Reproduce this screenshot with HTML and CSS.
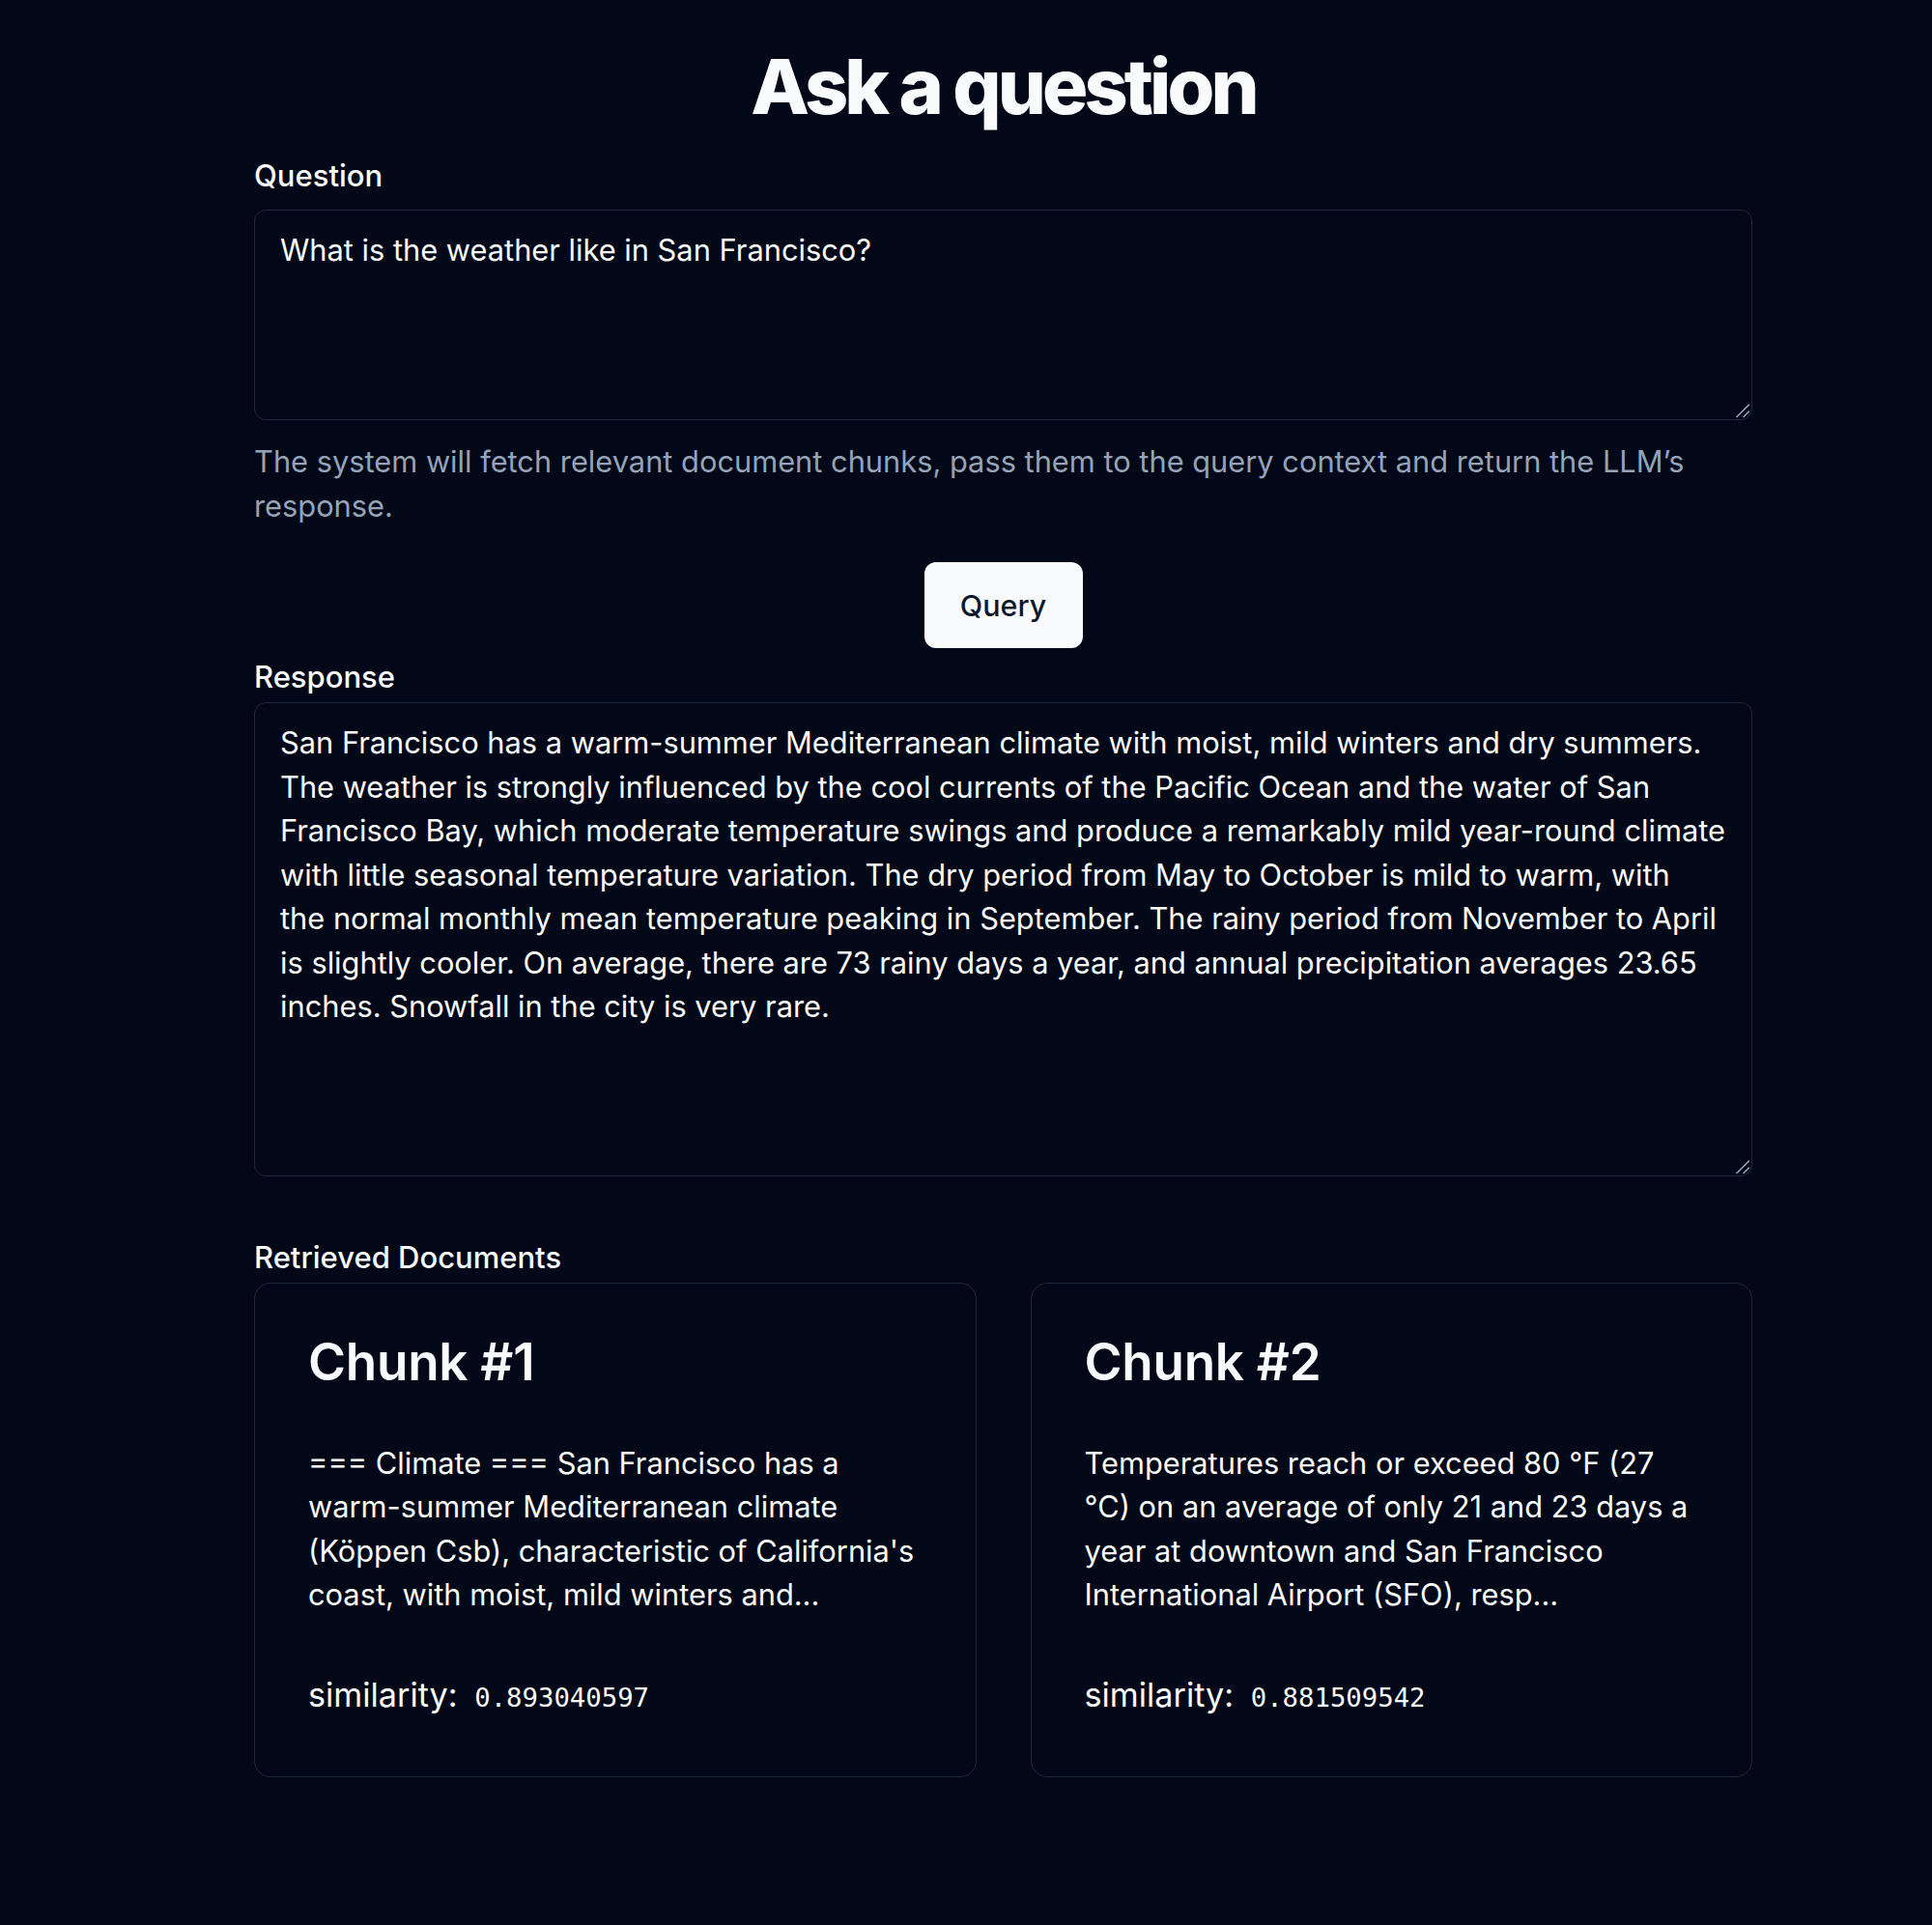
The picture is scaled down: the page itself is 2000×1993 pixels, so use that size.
FILE: index.html
```html
<!DOCTYPE html>
<html lang="en">
<head>
<meta charset="utf-8">
<title>Ask a question</title>
<link rel="stylesheet" href="styles.css">
</head>
<body>
<main class="page">
  <h1 class="title">Ask a question</h1>

  <label class="field-label label-question" for="question">Question</label>
  <div class="area-wrap area-question">
    <textarea id="question" class="text-area" wrap="off">What is the weather like in San Francisco?</textarea>
    <svg class="grip" width="16" height="16" viewBox="0 0 16 16" aria-hidden="true">
      <line x1="14.5" y1="2" x2="2" y2="14.5" />
      <line x1="14.5" y1="9" x2="9" y2="14.5" />
    </svg>
  </div>
  <p class="hint">The system will fetch relevant document chunks, pass them to the query context and return the LLM’s response.</p>

  <div class="actions">
    <button class="btn-primary" type="button">Query</button>
  </div>

  <label class="field-label label-response" for="response">Response</label>
  <div class="area-wrap area-response">
    <textarea id="response" class="text-area" wrap="off">San Francisco has a warm-summer Mediterranean climate with moist, mild winters and dry summers.
The weather is strongly influenced by the cool currents of the Pacific Ocean and the water of San
Francisco Bay, which moderate temperature swings and produce a remarkably mild year-round climate
with little seasonal temperature variation. The dry period from May to October is mild to warm, with
the normal monthly mean temperature peaking in September. The rainy period from November to April
is slightly cooler. On average, there are 73 rainy days a year, and annual precipitation averages 23.65
inches. Snowfall in the city is very rare.</textarea>
    <svg class="grip" width="16" height="16" viewBox="0 0 16 16" aria-hidden="true">
      <line x1="14.5" y1="2" x2="2" y2="14.5" />
      <line x1="14.5" y1="9" x2="9" y2="14.5" />
    </svg>
  </div>

  <div class="field-label label-docs">Retrieved Documents</div>
  <section class="cards">
    <article class="card">
      <h3 class="card-title">Chunk #1</h3>
      <p class="card-text">=== Climate === San Francisco has a<br>warm-summer Mediterranean climate<br>(Köppen Csb), characteristic of California's<br>coast, with moist, mild winters and...</p>
      <div class="card-footer">similarity: <code class="score">0.893040597</code></div>
    </article>
    <article class="card">
      <h3 class="card-title">Chunk #2</h3>
      <p class="card-text">Temperatures reach or exceed 80 °F (27<br>°C) on an average of only 21 and 23 days a<br>year at downtown and San Francisco<br>International Airport (SFO), resp...</p>
      <div class="card-footer">similarity: <code class="score">0.881509542</code></div>
    </article>
  </section>
</main>
</body>
</html>
```

FILE: styles.css
```css
html, body {
  margin: 0;
  padding: 0;
  background: #020817;
  color: #f8fafc;
  font-family: Inter, "Noto Sans", "Liberation Sans", sans-serif;
  color-scheme: dark;
}

* { box-sizing: border-box; }

.page {
  width: 1551px;
  margin-left: 263px;
  padding-top: 45px;
  padding-bottom: 150px;
  display: flex;
  flex-direction: column;
}

.title {
  margin: 0;
  font-size: 79px;
  line-height: 88px;
  font-weight: 800;
  letter-spacing: -0.05em;
  text-align: center;
}

.field-label {
  display: block;
  font-size: 31px;
  line-height: 30px;
  font-weight: 500;
  color: #f8fafc;
}

.label-question { margin-top: 34px; }
.label-response { margin-top: 15px; }
.label-docs { margin-top: 69px; }

.area-wrap {
  position: relative;
}

.text-area {
  display: block;
  width: 100%;
  height: 100%;
  border: 1px solid #1e293b;
  border-radius: 12px;
  background: #020817;
  color: #f8fafc;
  font-family: Inter, "Noto Sans", "Liberation Sans", sans-serif;
  font-size: 30.8px;
  line-height: 45.5px;
  padding: 18px 26px;
  overflow: hidden;
  resize: none;
  outline: none;
  white-space: pre;
}

.grip {
  position: absolute;
  right: 2px;
  bottom: 2px;
  stroke: #94a3b8;
  stroke-width: 1.6;
  stroke-linecap: round;
}

.area-question {
  margin-top: 20px;
  height: 218px;
}

.area-response {
  margin-top: 11px;
  height: 491px;
}

.hint {
  margin: 20px 0 0;
  font-size: 30.8px;
  line-height: 45.5px;
  color: #94a3b8;
}

.actions {
  display: flex;
  justify-content: center;
  margin-top: 36px;
}

.btn-primary {
  width: 164px;
  height: 89px;
  border: none;
  border-radius: 12px;
  background: #f8fafc;
  color: #0f172a;
  font-family: Inter, "Noto Sans", "Liberation Sans", sans-serif;
  font-size: 30.5px;
  font-weight: 500;
  padding: 0;
  cursor: pointer;
}

.cards {
  margin-top: 11px;
  display: grid;
  grid-template-columns: 1fr 1fr;
  column-gap: 56px;
}

.card {
  border: 1px solid #1e293b;
  border-radius: 17px;
  padding: 55px;
  display: flex;
  flex-direction: column;
}

.card-title {
  margin: 0;
  font-size: 53px;
  line-height: 53px;
  font-weight: 600;
  letter-spacing: -0.005em;
}

.card-text {
  margin: 55px 0 0;
  font-size: 30.8px;
  line-height: 45.4px;
  white-space: nowrap;
}

.card-footer {
  margin-top: 54px;
  font-size: 34.2px;
  line-height: 53px;
}

.score {
  font-family: "DejaVu Sans Mono", "Liberation Mono", monospace;
  font-size: 27.3px;
  margin-left: 8px;
}
```
